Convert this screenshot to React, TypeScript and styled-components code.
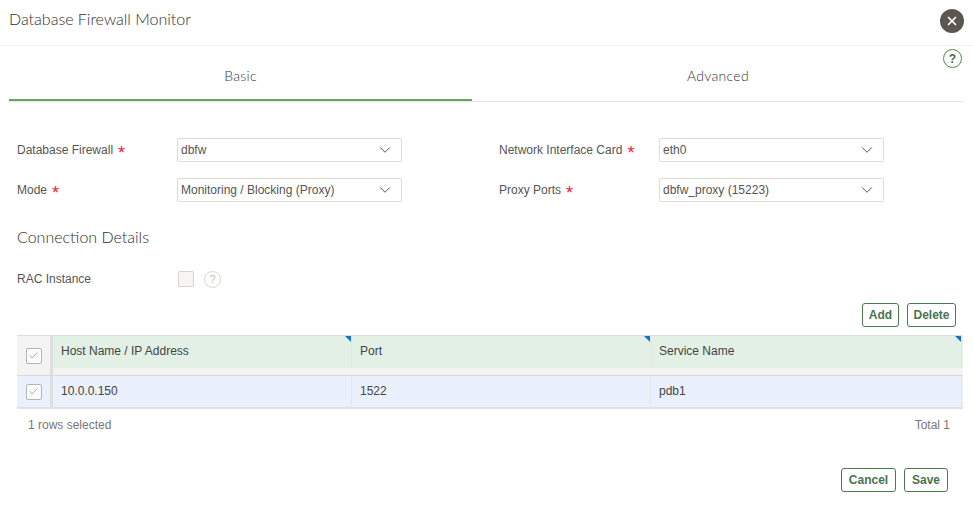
import React from "react";
import styled, { createGlobalStyle } from "styled-components";
import { ChevronDown, Check, X } from "lucide-react";

const GlobalStyle = createGlobalStyle`
  html, body {
    margin: 0;
    background: #fff;
    font-family: "Liberation Sans", Arial, sans-serif;
    font-size: 12px;
    color: #555;
  }
  * {
    box-sizing: border-box;
  }
`;

const Dialog = styled.div`
  width: 973px;
  height: 513px;
  overflow: hidden;
`;

const Header = styled.header`
  height: 46px;
  display: flex;
  align-items: center;
  justify-content: space-between;
  padding: 0 9px 4px 9px;
  border-bottom: 1px solid #eeeeee;
`;

const Title = styled.h1`
  margin: 0 0 4px;
  font-family: "Lato", sans-serif;
  font-weight: 300;
  font-size: 16px;
  color: #2f2f2f;
`;

const CloseButton = styled.button`
  width: 24px;
  height: 24px;
  border: 0;
  padding: 0;
  border-radius: 50%;
  background: #5b5650;
  color: #fff;
  display: flex;
  align-items: center;
  justify-content: center;
`;

const TabArea = styled.div`
  position: relative;
  padding-left: 9px;
`;

const HelpCorner = styled.span`
  position: absolute;
  top: 3px;
  right: 11px;
  width: 19px;
  height: 19px;
  border: 1px solid #4c8a50;
  border-radius: 50%;
  color: #3f6f43;
  font-weight: bold;
  font-size: 12px;
  display: flex;
  align-items: center;
  justify-content: center;
`;

const Tabs = styled.div`
  display: flex;
  width: 955px;
  height: 56px;
  border-bottom: 1px solid #e6e6e6;
`;

const Tab = styled.div<{ $active?: boolean; $width: number }>`
  width: ${(p) => p.$width}px;
  height: ${(p) => (p.$active ? 55 : 54)}px;
  padding-top: 21px;
  text-align: center;
  font-family: "Lato", sans-serif;
  font-weight: 300;
  font-size: 14px;
  letter-spacing: 0.3px;
  color: #333;
  border-bottom: ${(p) => (p.$active ? "2px solid #6aa166" : "0")};
`;

const FormGrid = styled.div`
  display: grid;
  grid-template-columns: 160px 322px 160px 225px;
  grid-auto-rows: 24px;
  row-gap: 16px;
  padding: 36px 0 0 17px;
`;

const Label = styled.label`
  display: flex;
  align-items: center;
  gap: 5px;
  font-size: 12px;
  color: #555;
`;

const Required = styled.span`
  color: #f0203c;
  font-size: 18px;
  height: 12px;
  line-height: 18px;
`;

const Select = styled.div`
  width: 225px;
  height: 24px;
  display: flex;
  align-items: center;
  justify-content: space-between;
  padding: 0 7px 0 3px;
  border: 1px solid #e0ddd2;
  border-radius: 2px;
  color: #555;
`;

const Section = styled.div`
  padding: 25px 0 0 17px;
`;

const SectionTitle = styled.h2`
  margin: 0;
  font-family: "Lato", sans-serif;
  font-weight: 300;
  font-size: 16px;
  color: #2f2f2f;
  line-height: 20px;
`;

const RacRow = styled.div`
  display: flex;
  align-items: center;
  height: 18px;
  margin-top: 23px;
`;

const RacLabel = styled.span`
  width: 161px;
  margin-top: -1px;
`;

const EmptyBox = styled.span`
  width: 16px;
  height: 16px;
  border: 1px solid #d5d3ca;
  border-radius: 2px;
  background: #f7f6f2;
`;

const HelpMuted = styled.span`
  width: 17px;
  height: 17px;
  margin-left: 10px;
  border: 1px solid #d8d6cf;
  border-radius: 50%;
  color: #c4c2ba;
  font-size: 11px;
  display: flex;
  align-items: center;
  justify-content: center;
`;

const Toolbar = styled.div`
  display: flex;
  justify-content: flex-end;
  gap: 8px;
  padding-right: 17px;
  margin-top: 15px;
`;

const ActionButton = styled.button<{ $width: number }>`
  width: ${(p) => p.$width}px;
  height: 24px;
  padding: 0;
  background: #fff;
  border: 1px solid #4b7a50;
  border-radius: 3px;
  color: #4a7350;
  font-family: "Liberation Sans", Arial, sans-serif;
  font-weight: bold;
  font-size: 12px;
`;

const Table = styled.div`
  margin: 8px 0 0 17px;
  width: 946px;
  border-top: 1px solid #dedede;
`;

const HeadWrap = styled.div`
  height: 40px;
  background: #f3f3f3;
  border-bottom: 1px solid #d9d9d9;
`;

const Row = styled.div<{ $head?: boolean }>`
  display: grid;
  grid-template-columns: 33px 3px 299px 299px 311px;
  grid-template-rows: 32px;
  height: ${(p) => (p.$head ? 32 : 33)}px;
  background: ${(p) => (p.$head ? "#e3f0e5" : "#eaf1fd")};
  border-bottom: ${(p) => (p.$head ? "0" : "2px solid #e0e0e0")};
`;

const SelectCell = styled.div<{ $head?: boolean }>`
  display: flex;
  align-items: center;
  justify-content: center;
  height: ${(p) => (p.$head ? 39 : 31)}px;
  background: ${(p) => (p.$head ? "#f3f3f3" : "transparent")};
`;

const Splitter = styled.div<{ $head?: boolean }>`
  background: #dfdfdf;
  height: ${(p) => (p.$head ? 39 : 31)}px;
`;

const CheckBox = styled.span`
  width: 16px;
  height: 16px;
  background: #fcfcfc;
  border: 1px solid #b5b5b5;
  border-radius: 2px;
  color: #707070;
  display: flex;
  align-items: center;
  justify-content: center;
`;

const Cell = styled.div`
  position: relative;
  display: flex;
  align-items: center;
  padding-left: 8px;
  padding-bottom: 2px;
  border-right: 1px solid #e4e7e4;
  color: #444;
`;

const Flag = styled.span`
  position: absolute;
  top: 0;
  right: 0;
  width: 0;
  height: 0;
  border-top: 6px solid #1672c9;
  border-left: 6px solid transparent;
`;

const TableFooter = styled.div`
  display: flex;
  justify-content: space-between;
  width: 946px;
  margin-left: 17px;
  padding: 9px 13px 0 11px;
  color: #777;
`;

const Footer = styled.div`
  display: flex;
  justify-content: flex-end;
  gap: 8px;
  padding-right: 25px;
  margin-top: 36px;
`;

const Chevron = () => <ChevronDown size={18} strokeWidth={1.2} color="#444" />;

const Tick = () => <Check size={11} strokeWidth={1.3} />;

const columns = ["Host Name / IP Address", "Port", "Service Name"];
const values = ["10.0.0.150", "1522", "pdb1"];

export default function App() {
  return (
    <Dialog>
      <GlobalStyle />
      <Header>
        <Title>Database Firewall Monitor</Title>
        <CloseButton>
          <X size={14} strokeWidth={3} />
        </CloseButton>
      </Header>
      <TabArea>
        <HelpCorner>?</HelpCorner>
        <Tabs>
          <Tab $active $width={463}>
            Basic
          </Tab>
          <Tab $width={492}>Advanced</Tab>
        </Tabs>
      </TabArea>
      <FormGrid>
        <Label>
          Database Firewall <Required>*</Required>
        </Label>
        <Select>
          dbfw <Chevron />
        </Select>
        <Label>
          Network Interface Card <Required>*</Required>
        </Label>
        <Select>
          eth0 <Chevron />
        </Select>
        <Label>
          Mode <Required>*</Required>
        </Label>
        <Select>
          Monitoring / Blocking (Proxy) <Chevron />
        </Select>
        <Label>
          Proxy Ports <Required>*</Required>
        </Label>
        <Select>
          dbfw_proxy (15223) <Chevron />
        </Select>
      </FormGrid>
      <Section>
        <SectionTitle>Connection Details</SectionTitle>
        <RacRow>
          <RacLabel>RAC Instance</RacLabel>
          <EmptyBox />
          <HelpMuted>?</HelpMuted>
        </RacRow>
      </Section>
      <Toolbar>
        <ActionButton $width={37}>Add</ActionButton>
        <ActionButton $width={49}>Delete</ActionButton>
      </Toolbar>
      <Table>
        <HeadWrap>
          <Row $head>
            <SelectCell $head>
              <CheckBox>
                <Tick />
              </CheckBox>
            </SelectCell>
            <Splitter $head />
            {columns.map((c) => (
              <Cell key={c}>
                {c}
                <Flag />
              </Cell>
            ))}
          </Row>
        </HeadWrap>
        <Row>
          <SelectCell>
            <CheckBox>
              <Tick />
            </CheckBox>
          </SelectCell>
          <Splitter />
          {values.map((v) => (
            <Cell key={v}>{v}</Cell>
          ))}
        </Row>
      </Table>
      <TableFooter>
        <span>1 rows selected</span>
        <span>Total 1</span>
      </TableFooter>
      <Footer>
        <ActionButton $width={55}>Cancel</ActionButton>
        <ActionButton $width={44}>Save</ActionButton>
      </Footer>
    </Dialog>
  );
}
